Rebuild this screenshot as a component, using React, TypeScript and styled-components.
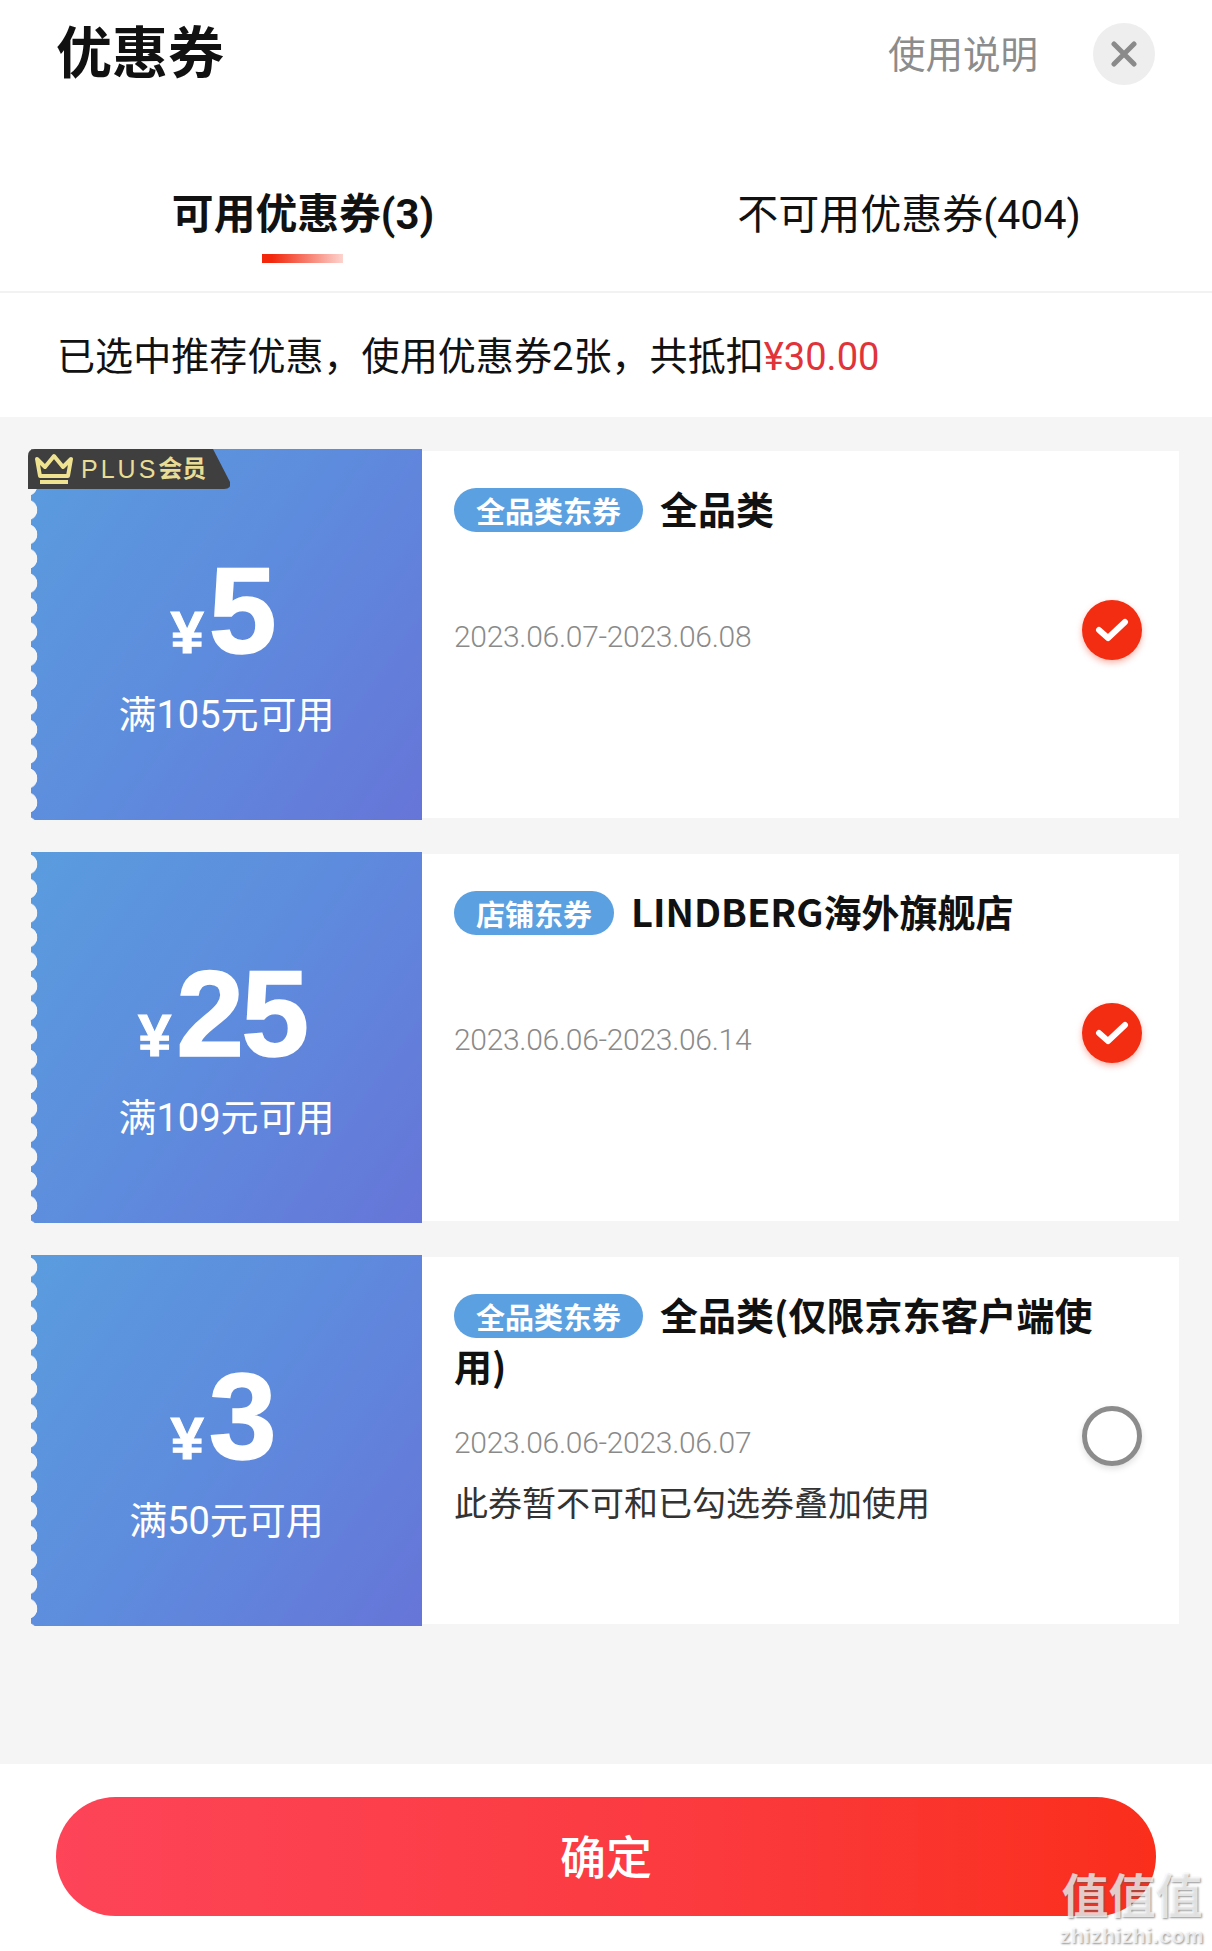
import React from 'react';
import styled, {createGlobalStyle} from 'styled-components';

const SANS = `"Roboto", "Noto Sans CJK SC", sans-serif`;
const CJK = `"Noto Sans CJK SC", sans-serif`;
const ARIAL = `"Liberation Sans", sans-serif`;

type Coupon = {
    amount: string;
    condition: string;
    tag: string;
    title: string;
    date: string;
    note?: string;
    plus?: boolean;
    checked: boolean;
};

const coupons: Coupon[] = [
    {amount: '5', condition: '满105元可用', tag: '全品类东券', title: '全品类', date: '2023.06.07-2023.06.08', plus: true, checked: true},
    {amount: '25', condition: '满109元可用', tag: '店铺东券', title: 'LINDBERG海外旗舰店', date: '2023.06.06-2023.06.14', checked: true},
    {amount: '3', condition: '满50元可用', tag: '全品类东券', title: '全品类(仅限京东客户端使用)', date: '2023.06.06-2023.06.07', note: '此券暂不可和已勾选券叠加使用', checked: false},
];

const GlobalStyle = createGlobalStyle`
    html, body {
        margin: 0;
        padding: 0;
        background: white;
    }
`;

const Page = styled.div`
    display: flex;
    flex-direction: column;
    width: 1212px;
    height: 1951px;
    overflow: hidden;
    font-family: ${SANS};
    color: #111;
`;

const Header = styled.div`
    display: flex;
    align-items: center;
    height: 108px;
    padding: 0 57px 0 57px;
    box-sizing: border-box;
`;

const Title = styled.div`
    flex: 1;
    font-size: 56px;
    font-weight: 700;
    line-height: 70px;
    margin-left: -1px;
`;

const Help = styled.div`
    font-size: 37.5px;
    line-height: 50px;
    color: #8c8c8c;
    margin: 2px 55px 0 0;
`;

const CloseButton = styled.div`
    display: flex;
    align-items: center;
    justify-content: center;
    width: 62px;
    height: 62px;
    border-radius: 50%;
    background: #eeeeee;
`;

const Tabs = styled.div`
    display: grid;
    grid-template-columns: 1fr 1fr;
    height: 185px;
    border-bottom: 2px solid #f2f2f2;
    box-sizing: border-box;
`;

const Tab = styled.div<{$active?: boolean}>`
    display: flex;
    flex-direction: column;
    align-items: center;
    padding-top: 77px;
    font-size: ${p => p.$active ? 41.8 : 41}px;
    line-height: 60px;
    font-weight: ${p => p.$active ? 700 : 400};
`;

const TabLine = styled.div`
    width: 81px;
    height: 9px;
    margin: 9px 2px 0 0;
    background: linear-gradient(90deg, #f2270c 0%, #f2270c 12%, rgba(242, 39, 12, 0.2) 100%);
`;

const Summary = styled.div`
    height: 124px;
    padding-left: 57px;
    font-size: 38.1px;
    line-height: 129px;
`;

const SummaryPrice = styled.span`
    color: #e0343a;
`;

const CouponList = styled.div`
    flex: 1;
    display: flex;
    flex-direction: column;
    gap: 32px;
    padding: 32px 33px 0 31px;
    background: #f5f5f5;
`;

const CouponCard = styled.div`
    display: flex;
    align-items: center;
    height: 371px;
    flex-shrink: 0;
`;

const Ticket = styled.div`
    position: relative;
    display: flex;
    flex-direction: column;
    align-items: center;
    width: 391px;
    height: 100%;
    padding-top: 102px;
    box-sizing: border-box;
    background: linear-gradient(125deg, #5a9cde 0%, #5e8bdd 50%, #6675d8 100%);
    color: white;
    &::before {
        content: '';
        position: absolute;
        left: 0;
        top: 0;
        bottom: 0;
        width: 7px;
        background: radial-gradient(circle at -4px 50%, #f5f5f5 10px, transparent 10.6px) 0 0 / 7px 24.4px repeat-y;
    }
`;

const PlusBadge = styled.div`
    position: absolute;
    left: -3px;
    top: 0;
    display: flex;
    align-items: center;
    width: 202px;
    height: 40px;
    padding-left: 6px;
    box-sizing: border-box;
    background: #3f3f3f;
    color: #e9dd96;
    clip-path: path('M7 0H185L202 33Q204 40 196 40H0V7Q0 0 7 0Z');
`;

const PlusWord = styled.span`
    margin-left: 7px;
    font-family: ${ARIAL};
    font-size: 25px;
    line-height: 40px;
    letter-spacing: 3px;
`;

const PlusMember = styled.span`
    font-size: 24px;
    font-weight: 700;
    line-height: 40px;
`;

const Amount = styled.div`
    display: flex;
    align-items: baseline;
    justify-content: center;
    margin-right: 9px;
    height: 120px;
    line-height: 120px;
`;

const Currency = styled.span`
    font-family: ${ARIAL};
    font-size: 60px;
    font-weight: 700;
    margin-right: 5px;
    -webkit-text-stroke: 1px white;
`;

const AmountValue = styled.span`
    font-family: ${ARIAL};
    font-size: 122px;
    font-weight: 700;
    letter-spacing: -3px;
    -webkit-text-stroke: 1.5px white;
`;

const Condition = styled.div`
    margin-top: 19px;
    font-size: 38px;
    line-height: 50px;
`;

const Detail = styled.div`
    position: relative;
    flex: 1;
    align-self: center;
    height: 367px;
    padding: 31px 75px 0 32px;
    box-sizing: border-box;
    background: white;
`;

const Heading = styled.div`
    min-height: 102px;
    font-family: ${CJK};
    font-size: 38px;
    font-weight: 700;
    line-height: 51px;
`;

const Tag = styled.span`
    display: inline-block;
    height: 44px;
    padding: 0 22px;
    margin-right: 17px;
    border-radius: 22px;
    background: #5ba0e0;
    color: white;
    font-size: 29px;
    line-height: 44px;
    vertical-align: 1px;
`;

const DateRange = styled.div`
    margin-top: 31px;
    font-size: 30px;
    font-weight: 300;
    line-height: 44px;
    letter-spacing: -0.3px;
    color: #8a8a8a;
`;

const Note = styled.div`
    margin-top: 17px;
    font-size: 34px;
    line-height: 44px;
    color: #333;
`;

const Checked = styled.div`
    position: absolute;
    right: 37px;
    top: 149px;
    display: flex;
    align-items: center;
    justify-content: center;
    width: 60px;
    height: 60px;
    border-radius: 50%;
    background: #f22d12;
    box-shadow: 0 3px 6px rgba(242, 45, 18, 0.35);
`;

const Unchecked = styled.div`
    position: absolute;
    right: 37px;
    top: 149px;
    width: 60px;
    height: 60px;
    border-radius: 50%;
    border: 5px solid #8c8c8c;
    box-sizing: border-box;
    box-shadow: 0 3px 6px rgba(0, 0, 0, 0.12);
`;

const Footer = styled.div`
    position: relative;
    height: 187px;
    flex-shrink: 0;
    padding: 33px 56px 0;
    box-sizing: border-box;
    background: white;
`;

const ConfirmButton = styled.div`
    display: flex;
    align-items: center;
    justify-content: center;
    height: 119px;
    padding-bottom: 6px;
    box-sizing: border-box;
    border-radius: 60px;
    background: linear-gradient(90deg, #fd4458 0%, #fb3a3e 60%, #fa2e1b 100%);
    color: white;
    font-size: 46px;
    font-weight: 500;
`;

const Watermark = styled.div`
    position: absolute;
    right: 7px;
    bottom: 3px;
    display: flex;
    flex-direction: column;
    align-items: center;
    width: 146px;
    color: rgba(255, 255, 255, 0.72);
    text-shadow: 1px 1px 2px rgba(90, 90, 90, 0.65);
`;

const WatermarkMark = styled.div`
    font-size: 47px;
    font-weight: 700;
    line-height: 54px;
`;

const WatermarkUrl = styled.div`
    font-family: ${ARIAL};
    font-size: 21px;
    font-weight: 700;
    line-height: 24px;
    letter-spacing: 0.6px;
`;

function App() {
    return (
        <Page>
            <GlobalStyle/>
            <Header>
                <Title>优惠券</Title>
                <Help>使用说明</Help>
                <CloseButton>
                    <svg width="26" height="26" viewBox="0 0 26 26" fill="none" stroke="#8a8a8a" strokeWidth="5" strokeLinecap="round">
                        <path d="M3 3L23 23M23 3L3 23"/>
                    </svg>
                </CloseButton>
            </Header>
            <Tabs>
                <Tab $active>
                    可用优惠券(3)
                    <TabLine/>
                </Tab>
                <Tab>不可用优惠券(404)</Tab>
            </Tabs>
            <Summary>
                已选中推荐优惠，使用优惠券2张，共抵扣<SummaryPrice>¥30.00</SummaryPrice>
            </Summary>
            <CouponList>
                {coupons.map(coupon => (
                    <CouponCard key={coupon.date}>
                        <Ticket>
                            {coupon.plus && (
                                <PlusBadge>
                                    <svg width="40" height="32" viewBox="0 0 40 32" fill="none" stroke="#efe291" strokeWidth="4" strokeLinejoin="round">
                                        <path d="M3 6L11 14L20 3L29 14L37 6L34 23H6Z"/>
                                        <path d="M6 29H34"/>
                                    </svg>
                                    <PlusWord>PLUS</PlusWord>
                                    <PlusMember>会员</PlusMember>
                                </PlusBadge>
                            )}
                            <Amount>
                                <Currency>¥</Currency>
                                <AmountValue>{coupon.amount}</AmountValue>
                            </Amount>
                            <Condition>{coupon.condition}</Condition>
                        </Ticket>
                        <Detail>
                            <Heading>
                                <Tag>{coupon.tag}</Tag>
                                {coupon.title}
                            </Heading>
                            <DateRange>{coupon.date}</DateRange>
                            {coupon.note && <Note>{coupon.note}</Note>}
                            {coupon.checked ? (
                                <Checked>
                                    <svg width="34" height="26" viewBox="0 0 34 26" fill="none" stroke="#fff" strokeWidth="6" strokeLinecap="round" strokeLinejoin="round">
                                        <path d="M4 13L13 21L30 5"/>
                                    </svg>
                                </Checked>
                            ) : <Unchecked/>}
                        </Detail>
                    </CouponCard>
                ))}
            </CouponList>
            <Footer>
                <ConfirmButton>确定</ConfirmButton>
                <Watermark>
                    <WatermarkMark>值值值</WatermarkMark>
                    <WatermarkUrl>zhizhizhi.com</WatermarkUrl>
                </Watermark>
            </Footer>
        </Page>
    );
}

export default App;
